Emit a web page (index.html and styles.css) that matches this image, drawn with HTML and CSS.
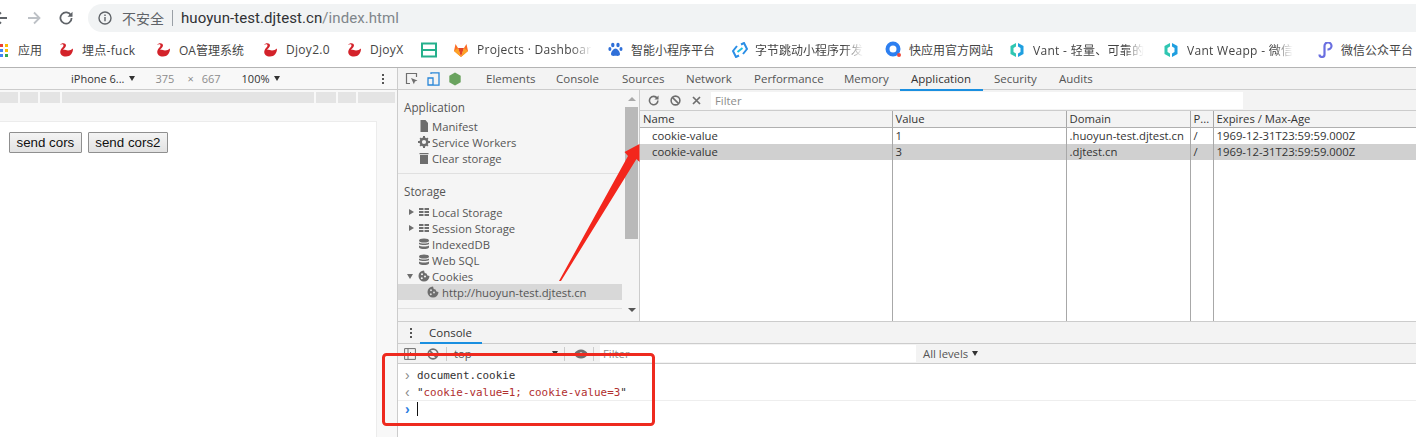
FILE: index.html
```html
<!DOCTYPE html>
<html lang="zh">
<head>
<meta charset="utf-8">
<title>Cookies</title>
<link rel="stylesheet" href="styles.css">
</head>
<body>
<svg class="defs" width="0" height="0" aria-hidden="true">
  <symbol id="swan" viewBox="2 0 16 16"><path fill="#d3222a" d="M2 3C3.500 .5 8 .8 8 3.500 8 5.500 5.500 6.500 5 8c1.500-.5 3 .5 5 .5s3.500-1 5-2c0 4.500-2.500 8-7 8s-6.500-3-5.500-6C3 6.500 5.500 5 5.500 3.500 5.500 2 3.500 2 2 3z"/></symbol>
  <symbol id="vant" viewBox="0 0 16 16"><path fill="#2fc6b2" d="M7 1 1.500 4v8L7 15v-3.500L4.500 10V6L7 4.500z"/><path fill="#1f9fe0" d="M9 1l5.500 3v8L9 15v-3.500l2.500-1.500V6L9 4.500z"/></symbol>
  <symbol id="db" viewBox="0 0 12 12"><ellipse cx="6" cy="2.500" rx="5" ry="2" fill="#6e6e6e"/><path fill="#6e6e6e" d="M1 4.500c1.500 1.300 8.500 1.300 10 0v1.500c-1.500 1.300-8.500 1.300-10 0zM1 7.500c1.500 1.300 8.500 1.300 10 0V9.500c-1.500 2-8.500 2-10 0z"/></symbol>
  <symbol id="grid" viewBox="0 0 12 10"><path fill="#6e6e6e" d="M1 1h4.500v2H1zM6.500 1H11v2H6.500zM1 4h4.500v2H1zM6.500 4H11v2H6.500zM1 7h4.500v2H1zM6.500 7H11v2H6.500z"/></symbol>
  <symbol id="cookie" viewBox="0 0 12 12"><path fill-rule="evenodd" fill="#6e6e6e" d="M6 .5a5.500 5.500 0 1 0 5.500 5.500A3 3 0 0 1 8.500 3.500 3 3 0 0 1 6 .5zM4 3.200a1 1 0 1 1 0 2 1 1 0 0 1 0-2zM7 5.500a1 1 0 1 1 0 2 1 1 0 0 1 0-2zM3.800 7.200a1 1 0 1 1 0 2 1 1 0 0 1 0-2z"/></symbol>
</svg>

<div class="page">
  <header class="toolbar">
    <svg class="nav-ico back" width="14" height="14" viewBox="0 0 14 14"><path d="M13 7H2M7 1.500 1.500 7 7 12.500" fill="none" stroke="#5f6368" stroke-width="1.800"/></svg>
    <svg class="nav-ico fwd" width="14" height="14" viewBox="0 0 14 14"><path d="M1 7h11M7 1.500 12.500 7 7 12.500" fill="none" stroke="#bdc1c6" stroke-width="1.800"/></svg>
    <svg class="nav-ico reload" width="14" height="14" viewBox="0 0 14 14"><path d="M12 4.500A5.600 5.600 0 1 0 12.600 7" fill="none" stroke="#5f6368" stroke-width="1.800"/><path d="M13.500 .8v5h-5z" fill="#5f6368"/></svg>
    <div class="omnibox">
      <svg class="info" width="14" height="14" viewBox="0 0 14 14"><circle cx="7" cy="7" r="6" fill="none" stroke="#5f6368" stroke-width="1.400"/><path d="M6.300 6h1.400v4.200H6.300zM6.300 3.600h1.400V5H6.300z" fill="#5f6368"/></svg>
      <span class="insecure">不安全</span>
      <span class="omni-sep"></span>
      <span class="url">huoyun-test.djtest.cn<span class="url-path">/index.html</span></span>
    </div>
  </header>

  <nav class="bookmarks">
    <span class="bm bm-apps"><svg width="8" height="14" viewBox="0 0 8 14"><path fill="#ea4335" d="M0 1h3v3H0z"/><path fill="#fbbc04" d="M5 1h3v3H5zM5 6h3v3H5z"/><path fill="#4285f4" d="M0 6h3v3H0zM0 11h3v3H0z"/><path fill="#34a853" d="M5 11h3v3H5z"/></svg><span class="bm-t">应用</span></span>
    <span class="bm bm-1"><svg class="ic" width="16" height="16"><use href="#swan"/></svg><span class="bm-t bm-lat">埋点-fuck</span></span>
    <span class="bm bm-2"><svg class="ic" width="16" height="16"><use href="#swan"/></svg><span class="bm-t">OA管理系统</span></span>
    <span class="bm bm-3"><svg class="ic" width="16" height="16"><use href="#swan"/></svg><span class="bm-t bm-lat">Djoy2.0</span></span>
    <span class="bm bm-4"><svg class="ic" width="16" height="16"><use href="#swan"/></svg><span class="bm-t bm-lat">DjoyX</span></span>
    <span class="bm bm-5"><svg width="16" height="16" viewBox="0 0 16 16"><path d="M1 1.500h14v13H1zM1 8h14" fill="none" stroke="#25b08c" stroke-width="2"/></svg></span>
    <span class="bm bm-6"><svg class="ic" width="16" height="16" viewBox="0 0 16 16"><path fill="#e24329" d="M8 15 5 6h6z"/><path fill="#fc6d26" d="M8 15 1 9l1.500-7L5 6zM8 15l7-6-1.500-7L11 6z"/><path fill="#fca326" d="M1 9l4-3 3 9zM15 9l-4-3-3 9z"/></svg><span class="bm-t bm-lat fade">Projects · Dashboar</span></span>
    <span class="bm bm-7"><svg class="ic" width="15" height="15" viewBox="0 0 15 15"><g fill="#2f6fd8"><ellipse cx="4.800" cy="3" rx="1.700" ry="2.300"/><ellipse cx="10" cy="3" rx="1.700" ry="2.300"/><ellipse cx="1.900" cy="7" rx="1.500" ry="2"/><ellipse cx="13" cy="7" rx="1.500" ry="2"/><path d="M7.500 6.500c2 0 4.500 3.400 4.500 5.500 0 2.500-3 1.800-4.500 1.800S3 14.500 3 12c0-2.100 2.500-5.500 4.500-5.500z"/></g></svg><span class="bm-t">智能小程序平台</span></span>
    <span class="bm bm-8"><svg class="ic" width="16" height="16" viewBox="0 0 16 16"><path d="M9 2.500 12 1l3 6-4 5M7 13.500 4 15 1 9l4-5" fill="none" stroke="#2a8ee6" stroke-width="2"/><path d="m5.500 10 5-4" stroke="#1fc0e0" stroke-width="2"/></svg><span class="bm-t fade">字节跳动小程序开发</span></span>
    <span class="bm bm-9"><svg class="ic" width="17" height="17" viewBox="0 0 17 17"><circle cx="8" cy="8" r="5.500" fill="none" stroke="#2d7ff0" stroke-width="4"/><circle cx="14" cy="14" r="2" fill="#ef4a3c"/></svg><span class="bm-t">快应用官方网站</span></span>
    <span class="bm bm-10"><svg class="ic" width="16" height="16"><use href="#vant"/></svg><span class="bm-t bm-lat fade">Vant - 轻量、可靠的</span></span>
    <span class="bm bm-11"><svg class="ic" width="16" height="16"><use href="#vant"/></svg><span class="bm-t bm-lat fade">Vant Weapp - 微信</span></span>
    <span class="bm bm-12"><svg class="ic" width="16" height="16" viewBox="0 0 16 16"><path d="M2.500 14a2.500 2.500 0 0 0 5 0V5.500a3.500 3.500 0 1 1 3 3.400" transform="translate(0 -1.500)" fill="none" stroke="#6a6fe0" stroke-width="2.200"/></svg><span class="bm-t">微信公众平台</span></span>
  </nav>

  <main class="main">
    <section class="device">
      <div class="dev-bar">
        <span class="dev-name">iPhone 6...</span><span class="tri"></span>
        <span class="dev-dim dev-w">375</span><span class="dev-dim dev-x">×</span><span class="dev-dim dev-h">667</span>
        <span class="dev-zoom">100%</span><span class="tri"></span>
        <span class="kebab"><i></i><i></i><i></i></span>
      </div>
      <div class="ruler"><i class="r18"></i><i class="r18"></i><i class="r20"></i><i class="rfill"></i><i class="r20"></i><i class="r18"></i><i class="r37"></i></div>
      <div class="viewport">
        <div class="webpage">
          <button class="btn" type="button">send cors</button>
          <button class="btn" type="button">send cors2</button>
        </div>
      </div>
    </section>

    <section class="devtools">
      <div class="dt-tabs">
        <svg class="dt-ic" width="13" height="13" viewBox="0 0 13 13"><path d="M5 11.500H1.500v-10h10V5" fill="none" stroke="#6e6e6e" stroke-width="1.200"/><path d="m6 6 6.500 2.500-2.600 1 -1 2.700z" fill="#6e6e6e"/></svg>
        <svg class="dt-ic dt-ic-b" width="13" height="14" viewBox="0 0 13 14"><path d="M4 2V.8h8v12.400H6M1 6h5v7H1z" fill="none" stroke="#2a87d8" stroke-width="1.300"/></svg>
        <svg class="dt-ic dt-ic-c" width="12" height="14" viewBox="0 0 12 14"><path d="M6 .5 11.700 3.700v6.600L6 13.500.3 10.300V3.700z" fill="#6aa35f"/></svg>
        <div class="tabs">
          <span class="tab">Elements</span>
          <span class="tab">Console</span>
          <span class="tab">Sources</span>
          <span class="tab">Network</span>
          <span class="tab">Performance</span>
          <span class="tab">Memory</span>
          <span class="tab tab-on">Application</span>
          <span class="tab">Security</span>
          <span class="tab">Audits</span>
        </div>
      </div>

      <div class="app-panel">
        <aside class="sidebar">
          <div class="side-tree">
            <div class="side-h">Application</div>
            <div class="side-i"><svg width="12" height="12" viewBox="0 0 12 12"><path d="M2.500 0H7.500L10 3v9H2.500z" fill="#6e6e6e"/></svg><span>Manifest</span></div>
            <div class="side-i"><svg width="12" height="12" viewBox="0 0 12 12"><circle cx="6" cy="6" r="3.300" fill="none" stroke="#6e6e6e" stroke-width="2.400"/><path d="M5 0h2v2H5zM5 10h2v2H5zM0 5h2v2H0zM10 5h2v2h-2zM1.500 2.800 2.800 1.500l1.200 1.200L2.700 4zM8 9.300 9.300 8l1.200 1.200-1.300 1.300zM9.200 1.500l1.300 1.300L9.300 4 8 2.700zM2.700 8 4 9.300 2.800 10.500 1.500 9.200z" fill="#6e6e6e"/></svg><span>Service Workers</span></div>
            <div class="side-i"><svg width="12" height="12" viewBox="0 0 12 12"><path d="M2 3h8v9H2zM1.500 1h9v1.200h-9z" fill="#6e6e6e"/></svg><span>Clear storage</span></div>
            <div class="side-sep side-sep-a"></div>
            <div class="side-h side-h-s">Storage</div>
            <div class="side-i"><b class="arr-r"></b><svg width="12" height="10"><use href="#grid"/></svg><span>Local Storage</span></div>
            <div class="side-i"><b class="arr-r"></b><svg width="12" height="10"><use href="#grid"/></svg><span>Session Storage</span></div>
            <div class="side-i"><svg width="12" height="12"><use href="#db"/></svg><span>IndexedDB</span></div>
            <div class="side-i"><svg width="12" height="12"><use href="#db"/></svg><span>Web SQL</span></div>
            <div class="side-i"><b class="arr-d"></b><svg width="12" height="12"><use href="#cookie"/></svg><span>Cookies</span></div>
            <div class="side-i side-sel"><svg width="12" height="12"><use href="#cookie"/></svg><span>http://huoyun-test.djtest.cn</span></div>
            <div class="side-sep side-sep-b"></div>
          </div>
          <div class="scrollbar">
            <b class="sb-up"></b>
            <div class="sb-thumb"></div>
            <b class="sb-down"></b>
          </div>
        </aside>

        <div class="cookies">
          <div class="filter-bar">
            <svg width="11" height="11" viewBox="0 0 12 12"><path d="M10 3.500A4.600 4.600 0 1 0 10.800 6" fill="none" stroke="#6e6e6e" stroke-width="1.700"/><path d="M11.500 .5v4.500H7z" fill="#6e6e6e"/></svg>
            <svg width="11" height="11" viewBox="0 0 12 12"><circle cx="6" cy="6" r="4.800" fill="none" stroke="#6e6e6e" stroke-width="1.700"/><path d="M2.600 2.600l6.800 6.800" stroke="#6e6e6e" stroke-width="1.700"/></svg>
            <svg width="9" height="9" viewBox="0 0 9 9"><path d="M1 1l7 7M8 1 1 8" stroke="#6e6e6e" stroke-width="1.700"/></svg>
            <div class="filter-input">Filter</div>
          </div>
          <table class="grid">
            <colgroup><col class="c1"><col class="c2"><col class="c3"><col class="c4"><col></colgroup>
            <thead><tr><th>Name</th><th>Value</th><th>Domain</th><th>P...</th><th>Expires / Max-Age</th></tr></thead>
            <tbody>
              <tr><td class="td-name">cookie-value</td><td>1</td><td>.huoyun-test.djtest.cn</td><td>/</td><td>1969-12-31T23:59:59.000Z</td></tr>
              <tr class="row-sel"><td class="td-name">cookie-value</td><td>3</td><td>.djtest.cn</td><td>/</td><td>1969-12-31T23:59:59.000Z</td></tr>
              <tr class="row-fill"><td></td><td></td><td></td><td></td><td></td></tr>
            </tbody>
          </table>
        </div>
      </div>

      <div class="drawer">
        <div class="drawer-tabs">
          <span class="kebab kebab-d"><i></i><i></i><i></i></span>
          <span class="drawer-tab">Console</span>
        </div>
        <div class="con-bar">
          <svg width="12" height="12" viewBox="0 0 12 12"><path d="M.6.6h10.800v10.800H.6zM4 .6v10.800M6 4l2 2-2 2" fill="none" stroke="#6e6e6e"/></svg>
          <svg class="con-block" width="12" height="12" viewBox="0 0 12 12"><circle cx="6" cy="6" r="4.800" fill="none" stroke="#6e6e6e" stroke-width="1.700"/><path d="M2.600 2.600l6.800 6.800" stroke="#6e6e6e" stroke-width="1.700"/></svg>
          <span class="con-sep con-sep-a"></span>
          <span class="con-top">top</span>
          <span class="tri tri-top"></span>
          <span class="con-sep"></span>
          <svg class="con-eye" width="14" height="10" viewBox="0 0 14 10"><path d="M0 5c3-6 11-6 14 0-3 6-11 6-14 0z" fill="#6e6e6e"/><circle cx="7" cy="5" r="1.700" fill="#f3f3f3"/></svg>
          <span class="con-sep con-sep-c"></span>
          <div class="con-filter">Filter</div>
          <span class="con-levels">All levels</span><span class="tri"></span>
        </div>
        <div class="con-body">
          <div class="con-line"><b class="chev">&#8250;</b><span>document.cookie</span></div>
          <div class="con-line con-res"><b class="chev">&#8249;</b><span>"<em>cookie-value=1; cookie-value=3</em>"</span></div>
          <div class="con-line con-prompt"><b class="chev chev-b">&#8250;</b><i class="caret"></i></div>
        </div>
      </div>
    </section>
  </main>

  <svg class="annot" width="1416" height="437" viewBox="0 0 1416 437" aria-hidden="true">
    <path d="M559 281 628 156 624.500 152 639.500 144 639.500 162 636.500 159 561 281z" fill="#f3261c"/>
    <rect x="383.500" y="354.500" width="270" height="70" rx="3" fill="none" stroke="#ee2a1f" stroke-width="3"/>
  </svg>
</div>
</body>
</html>
```
FILE: styles.css
```css
* { box-sizing: border-box; }
html, body { margin: 0; padding: 0; background: #fff; }
body { font-family: "Open Sans", "Noto Sans CJK SC", sans-serif; font-size: 12px; color: #333; }
.defs { position: absolute; }
.page { position: relative; width: 1416px; height: 437px; overflow: hidden; display: flex; flex-direction: column; }

.toolbar { height: 32px; flex: none; display: flex; align-items: flex-start; padding-top: 4px; }
.nav-ico { flex: none; margin-top: 7px; }
.back { margin-left: -6px; }
.fwd { margin-left: 19px; }
.reload { margin-left: 18px; }
.omnibox { margin-left: 15px; flex: 1; height: 28px; background: #f1f3f4; border-radius: 14px 0 0 14px; display: flex; align-items: center; padding-left: 10px; }
.insecure { margin-left: 10px; font-size: 14px; color: #5f6368; font-family: "Noto Sans CJK SC", sans-serif; }
.omni-sep { width: 1px; height: 16px; background: #9aa0a6; margin: 0 8px; }
.url { font-family: Roboto, sans-serif; font-size: 15px; color: #303134; letter-spacing: .07px; }
.url-path { color: #80868b; }

.bookmarks { height: 36px; flex: none; display: grid; grid-template-columns: 60px 97px 107px 84px 73px 32px 155px 124px 153px 125px 154px 153px 99px; align-items: center; border-bottom: 1px solid #b4b4b4; }
.bm { display: flex; align-items: center; min-width: 0; padding-right: 17px; white-space: nowrap; }
.bm svg { flex: none; }
.bm-t { font-size: 12px; color: #444; margin-left: 6px; }
.bm-lat { letter-spacing: .3px; }
.bm-apps .bm-t { margin-left: 10px; }
.bm-9 .bm-t { margin-left: 7px; }
.bm-7 .bm-t, .bm-10 .bm-t, .bm-11 .bm-t, .bm-12 .bm-t, .bm-6 .bm-t { margin-left: 8px; }
.bm-8 .bm-t { margin-left: 7px; }
.bm-10 .ic, .bm-11 .ic { margin-left: -1px; }
.bm-12 { padding-right: 0; }
.fade { -webkit-mask-image: linear-gradient(90deg, #000 82%, transparent); mask-image: linear-gradient(90deg, #000 82%, transparent); }

.main { flex: 1; min-height: 0; display: flex; }
.device { width: 398px; flex: none; display: flex; flex-direction: column; border-right: 1px solid #ccc; background: #f8f8f8; }
.dev-bar { height: 22px; flex: none; display: flex; align-items: center; padding-left: 71px; background: #f8f8f8; border-bottom: 1px solid #ccc; font-size: 11px; color: #333; position: relative; }
.tri { display: inline-block; width: 0; height: 0; border-left: 3px solid transparent; border-right: 3px solid transparent; border-top: 5px solid #333; margin-left: 4px; flex: none; }
.dev-dim { color: #8c8c8c; }
.dev-w { margin-left: 21px; }
.dev-x { margin-left: 13px; }
.dev-h { margin-left: 8px; }
.dev-zoom { margin-left: 21px; }
.kebab { display: flex; flex-direction: column; gap: 2px; margin-left: 102px; }
.kebab i { display: block; width: 2px; height: 2px; background: #555; }
.ruler { height: 11px; margin: 2px 2px 0 0; flex: none; display: flex; gap: 2px; }
.ruler i { display: block; background: #e4e4e4; }
.r18 { width: 18px; }
.r20 { width: 20px; }
.r37 { width: 37px; }
.rfill { flex: 1; }
.viewport { flex: 1; padding: 18px 20px 0 0; }
.webpage { height: 100%; background: #fff; border: 1px solid #ececec; border-left: 0; border-bottom: 0; padding: 10px 9px; display: flex; align-items: flex-start; gap: 6px; }
.btn { font-family: "Liberation Sans", Arial, sans-serif; font-size: 13.330px; height: 21px; padding: 0 6.500px; color: #111; background: linear-gradient(#f4f4f4, #e2e2e2); border: 1px solid #8f8f8f; border-radius: 1px; }

.devtools { flex: 1; min-width: 0; display: flex; flex-direction: column; background: #f3f3f3; }
.dt-tabs { height: 22px; flex: none; display: flex; align-items: center; padding-left: 7px; border-bottom: 1px solid #ccc; }
.dt-ic { flex: none; }
.dt-ic-b { margin-left: 9px; }
.dt-ic-c { margin-left: 9px; }
.tabs { display: grid; grid-template-columns: 70px 66px 64px 68px 90px 67px 83px 65px 70px; margin-left: 14px; height: 21px; }
.tab { font-size: 11.500px; color: #555; line-height: 21px; padding-left: 11px; white-space: nowrap; }
.tab-on { color: #333; border-bottom: 2px solid #1a8fe0; }

.app-panel { height: 232px; flex: none; display: flex; border-bottom: 1px solid #ccc; }
.sidebar { width: 242px; flex: none; display: flex; border-right: 1px solid #ccc; background: #f5f5f5; }
.side-tree { width: 224px; flex: none; padding-top: 9px; }
.side-h { height: 16px; line-height: 16px; padding-left: 6px; font-size: 11.700px; color: #555; }
.side-h-s { margin-bottom: 5px; }
.side-i { height: 16px; display: flex; align-items: center; padding-left: 20px; position: relative; font-size: 11.300px; color: #555; white-space: nowrap; }
.side-h + .side-i { margin-top: 3px; }
.side-h-s + .side-i { margin-top: 0; }
.side-i span { margin-left: 2px; }
.side-i svg { flex: none; }
.side-sep { border-top: 1px solid #e0e0e0; width: 100%; }
.side-sep-a { margin: 7px 0 9px; }
.side-sep-b { margin-top: 8px; }
.side-sel { background: #d8d8d8; padding-left: 29px; }
.side-sel span { margin-left: 3px; }
.arr-r { position: absolute; left: 11px; top: 5px; width: 0; height: 0; border-left: 5px solid #6e6e6e; border-top: 3px solid transparent; border-bottom: 3px solid transparent; }
.arr-d { position: absolute; left: 9px; top: 6px; width: 0; height: 0; border-top: 5px solid #6e6e6e; border-left: 3px solid transparent; border-right: 3px solid transparent; }
.scrollbar { width: 13px; margin-left: 3px; flex: none; display: flex; flex-direction: column; align-items: center; padding-top: 7px; }
.sb-up { width: 0; height: 0; border-bottom: 4px solid #a8a8a8; border-left: 4px solid transparent; border-right: 4px solid transparent; }
.sb-thumb { width: 13px; height: 132px; background: #b9b9b9; margin-top: 6px; }
.sb-down { width: 0; height: 0; border-top: 4px solid #555; border-left: 4px solid transparent; border-right: 4px solid transparent; margin-top: 69px; }

.cookies { flex: 1; min-width: 0; display: flex; flex-direction: column; }
.filter-bar { height: 21px; flex: none; display: flex; align-items: center; padding-left: 8px; gap: 11px; border-bottom: 1px solid #ccc; }
.filter-input { width: 532px; height: 17px; margin-left: -1px; background: #fff; padding-left: 4px; font-size: 11.300px; line-height: 17px; color: #8c8c8c; }
.grid { flex: 1; width: 100%; border-collapse: collapse; table-layout: fixed; background: #fff; font-size: 11.300px; color: #333; }
.c1 { width: 252px; }
.c2 { width: 174px; }
.c3 { width: 124px; }
.c4 { width: 23px; }
.grid th { height: 16px; padding: 0 3px; font-weight: 400; text-align: left; background: #f3f3f3; border-bottom: 1px solid #b0b0b0; border-left: 1px solid #a8a8a8; line-height: 15px; white-space: nowrap; overflow: hidden; }
.grid th:first-child, .grid td:first-child { border-left: 0; }
.grid td { height: 16.500px; padding: 0 3px; border-left: 1px solid #a8a8a8; line-height: 15px; white-space: nowrap; overflow: hidden; }
.grid .td-name { padding-left: 12px; }
.row-sel td { background: #d0d0d0; }
.grid .row-fill td { height: auto; }

.drawer { flex: 1; min-height: 0; display: flex; flex-direction: column; background: #fff; }
.drawer-tabs { height: 22px; flex: none; display: flex; align-items: center; background: #f3f3f3; border-bottom: 1px solid #ccc; }
.kebab-d { margin-left: 12px; }
.drawer-tab { height: 22px; margin-left: 8px; padding: 0 9px; width: 62px; font-size: 11.500px; line-height: 22px; color: #333; border-bottom: 2px solid #1a8fe0; }
.con-bar { height: 20px; flex: none; display: flex; align-items: center; padding-left: 6px; background: #f3f3f3; border-bottom: 1px solid #ccc; font-size: 11.300px; color: #555; }
.con-block { margin-left: 11px; }
.con-sep { width: 1px; height: 14px; background: #ccc; margin-left: 6px; }
.con-sep-a { margin-left: 7px; }
.con-sep-c { margin-left: 5px; }
.con-top { margin-left: 7px; width: 98px; }
.tri-top { margin-left: 0; }
.con-eye { margin-left: 9px; }
.con-filter { width: 316px; height: 17px; margin-left: 6px; background: #fff; padding-left: 3px; line-height: 17px; color: #8c8c8c; }
.con-levels { margin-left: 7px; }
.con-body { flex: 1; padding-top: 2px; font-family: "DejaVu Sans Mono", "Liberation Mono", monospace; font-size: 10.900px; color: #333; background: #fff; }
.con-line { display: flex; align-items: center; height: 18px; padding-left: 7px; position: relative; }
.con-line span { margin-left: 8px; }
.con-res { border-bottom: 1px solid #eee; height: 17px; }
.con-prompt { height: 16px; }
.con-res em { font-style: normal; color: #b12f2f; }
.chev { width: 4px; font-weight: 400; font-size: 14px; color: #888; font-family: "Liberation Sans", sans-serif; }
.chev-b { color: #2a7de1; font-weight: 700; }
.caret { display: block; width: 1px; height: 14px; background: #111; margin-left: 8px; }

.annot { position: absolute; left: 0; top: 0; pointer-events: none; }
```
